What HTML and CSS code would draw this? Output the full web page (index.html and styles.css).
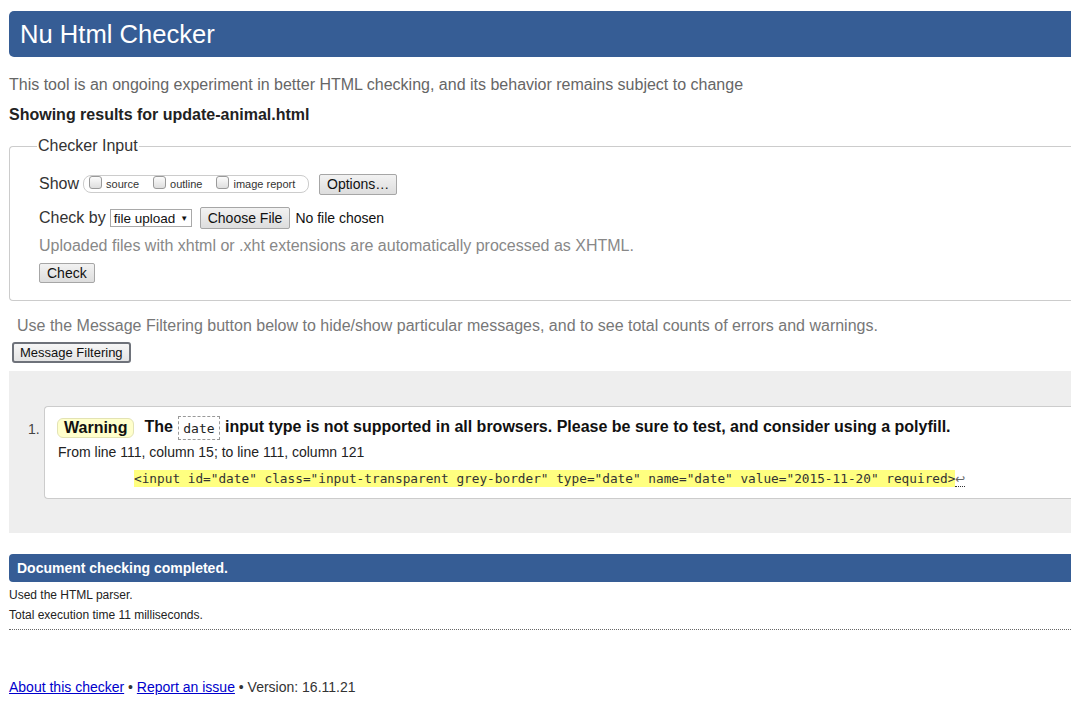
FILE: index.html
```html
<!DOCTYPE html>
<html lang="en">
<head>
<meta charset="utf-8">
<title>Nu Html Checker</title>
<link rel="stylesheet" href="styles.css">
</head>
<body>
<div class="page">
  <h1 class="title-bar">Nu Html Checker</h1>
  <p class="intro">This tool is an ongoing experiment in better HTML checking, and its behavior remains subject to change</p>
  <p class="showing">Showing results for update-animal.html</p>

  <fieldset class="checker-input">
    <legend class="legend">Checker Input</legend>
    <div class="row row-show">
      <span class="row-label">Show</span>
      <span class="pill">
        <label class="opt"><span class="cb"></span>source</label>
        <label class="opt"><span class="cb"></span>outline</label>
        <label class="opt"><span class="cb"></span>image report</label>
      </span>
      <span class="btn btn-options">Options…</span>
    </div>
    <div class="row row-checkby">
      <span class="row-label">Check by</span>
      <span class="select">file upload <span class="caret">▼</span></span>
      <span class="btn btn-file">Choose File</span>
      <span class="nofile">No file chosen</span>
    </div>
    <p class="upload-note">Uploaded files with xhtml or .xht extensions are automatically processed as XHTML.</p>
    <div class="row row-check">
      <span class="btn btn-check">Check</span>
    </div>
  </fieldset>

  <p class="filter-note">Use the Message Filtering button below to hide/show particular messages, and to see total counts of errors and warnings.</p>
  <div class="filter-row"><span class="btn btn-filter">Message Filtering</span></div>

  <div class="results">
    <ol class="messages">
      <li class="message">
        <p class="msg-line"><span class="badge">Warning</span> <span class="msg-text">The <code class="inline-code">date</code> input type is not supported in all browsers. Please be sure to test, and consider using a polyfill.</span></p>
        <p class="location">From line 111, column 15; to line 111, column 121</p>
        <p class="extract"><code class="hl">&lt;input id="date" class="input-transparent grey-border" type="date" name="date" value="2015-11-20" required&gt;</code><b class="lf">↩</b></p>
      </li>
    </ol>
  </div>

  <div class="done-bar">Document checking completed.</div>
  <div class="details">
    <p class="detail">Used the HTML parser.</p>
    <p class="detail">Total execution time 11 milliseconds.</p>
  </div>

  <p class="footer"><a href="#">About this checker</a> • <a href="#">Report an issue</a> • Version: 16.11.21</p>
</div>
</body>
</html>
```

FILE: styles.css
```css
html, body {
  margin: 0;
  padding: 0;
  overflow: hidden;
  background: #fff;
}

body {
  font-family: "Liberation Sans", Arial, sans-serif;
  color: #222;
}

.page {
  width: 1120px;
  padding: 11px 0 0 9px;
}

.title-bar {
  margin: 0;
  height: 46px;
  line-height: 46px;
  padding-left: 11px;
  background: #365d95;
  color: #fff;
  font-weight: normal;
  font-size: 25.6px;
  border-radius: 5px 0 0 5px;
}

.intro {
  margin: 19px 0 0;
  font-size: 16px;
  line-height: 18px;
  color: #666;
}

.showing {
  margin: 12px 0 0;
  font-size: 16px;
  line-height: 18px;
  font-weight: bold;
  color: #222;
}

.checker-input {
  margin: 13px 0 0;
  padding: 18px 0 17px 27px;
  border: 1px solid #ccc;
  border-right: none;
  border-radius: 4px 0 0 4px;
}

.legend {
  padding: 0 1px;
  font-size: 16px;
  line-height: 18px;
  color: #333;
}

.row {
  display: flex;
  align-items: center;
  margin-left: 2px;
}

.row-label {
  font-size: 16px;
  color: #333;
  margin-right: 4px;
}

.row-show {
  height: 22px;
}

.pill {
  display: flex;
  align-items: center;
  height: 16px;
  border: 1px solid #ccc;
  border-radius: 8px;
  padding: 0 6px 0 5px;
  font-size: 11px;
  color: #333;
  width: 213px;
  box-sizing: content-box;
}

.opt {
  display: flex;
  align-items: center;
  margin-right: 14px;
}

.opt:last-child {
  margin-right: 0;
}

.cb {
  display: inline-block;
  width: 11px;
  height: 11px;
  border: 1px solid #9a9a9a;
  border-radius: 3px;
  background: linear-gradient(#fcfcfc, #dedede);
  margin-right: 4px;
  margin-top: -4px;
}

.btn {
  display: inline-flex;
  align-items: center;
  box-sizing: border-box;
  padding: 0 7px;
  font-size: 14px;
  color: #111;
  background: linear-gradient(#f2f2f2, #dddddd);
  border: 1px solid #a6a6a6;
  border-radius: 2px;
  white-space: nowrap;
}

.btn-options {
  margin-left: 10px;
  height: 21px;
}

.row-checkby {
  margin-top: 12px;
  height: 22px;
}

.select {
  display: inline-flex;
  align-items: center;
  box-sizing: border-box;
  height: 18px;
  width: 82px;
  padding: 0 3px;
  border: 1px solid #a9a9a9;
  font-size: 13.5px;
  color: #111;
  background: #fff;
  white-space: nowrap;
}

.caret {
  font-size: 8px;
  margin-left: 5px;
}

.btn-file {
  margin-left: 8px;
  height: 22px;
  padding: 0 7px;
}

.nofile {
  margin-left: 5px;
  font-size: 14px;
  color: #111;
}

.upload-note {
  margin: 8px 0 0 2px;
  font-size: 16px;
  line-height: 18px;
  color: #888;
}

.row-check {
  margin-top: 8px;
}

.btn-check {
  height: 20px;
  padding: 0 7px;
}

.filter-note {
  margin: 16px 0 0 8px;
  font-size: 16px;
  line-height: 18px;
  color: #777;
}

.filter-row {
  margin: 7px 0 0 3px;
}

.btn-filter {
  height: 21px;
  padding: 0 6px;
  border: 2px solid #6e727a;
  border-radius: 3px;
  background: linear-gradient(#f6f6f6, #e4e4e4);
  font-size: 13px;
}

.results {
  margin-top: 8px;
  background: #eee;
  padding: 35px 0 34px 35px;
}

.messages {
  margin: 0;
  padding: 0;
  list-style: none;
  counter-reset: msg;
}

.message {
  position: relative;
  background: #fff;
  border: 1px solid #ccc;
  border-right: none;
  border-radius: 4px 0 0 4px;
  height: 93px;
  box-sizing: border-box;
  padding: 7px 0 0 12px;
  counter-increment: msg;
}

.message::before {
  content: counter(msg) ".";
  position: absolute;
  left: -17px;
  top: 14px;
  font-size: 14px;
  color: #444;
}

.msg-line {
  margin: 0;
  display: flex;
  align-items: center;
  font-size: 16px;
  font-weight: bold;
  color: #111;
  height: 27px;
}

.badge {
  display: inline-block;
  background: #ffffcc;
  border: 1px solid #e3e3b4;
  border-radius: 6px;
  padding: 0 6px 0 6px;
  line-height: 18px;
  margin-right: 10px;
}

.msg-text {
  white-space: nowrap;
}

.inline-code {
  display: inline-block;
  font-family: "DejaVu Sans Mono", "Liberation Mono", monospace;
  font-weight: normal;
  font-size: 13px;
  border: 1px dashed #999;
  padding: 4px 4px 3px;
  margin: 0 1px;
  color: #222;
  vertical-align: middle;
}

.location {
  margin: 3px 0 0 1px;
  font-size: 14px;
  line-height: 16px;
  color: #222;
}

.extract {
  margin: 10px 0 0 77px;
  white-space: nowrap;
  font-size: 12.75px;
  line-height: 17px;
}

.hl {
  font-family: "DejaVu Sans Mono", "Liberation Mono", monospace;
  background: #ffff80;
  color: #333;
  font-size: 12.75px;
  padding: 1px 0;
}

.lf {
  font-weight: normal;
  font-family: "DejaVu Sans", sans-serif;
  font-size: 12px;
  color: #666;
  border-bottom: 1px dotted #333;
}

.done-bar {
  margin-top: 21px;
  height: 28px;
  line-height: 28px;
  background: #365d95;
  color: #fff;
  font-weight: bold;
  font-size: 14px;
  padding-left: 8px;
  border-radius: 4px 0 0 4px;
}

.details {
  border-bottom: 1px dotted #666;
  padding: 3px 0 4px;
}

.detail {
  margin: 0;
  font-size: 12px;
  line-height: 20px;
  color: #222;
}

.footer {
  margin: 49px 0 0;
  font-size: 14px;
  line-height: 16px;
  color: #333;
}

.footer a {
  color: #00c;
}
```
